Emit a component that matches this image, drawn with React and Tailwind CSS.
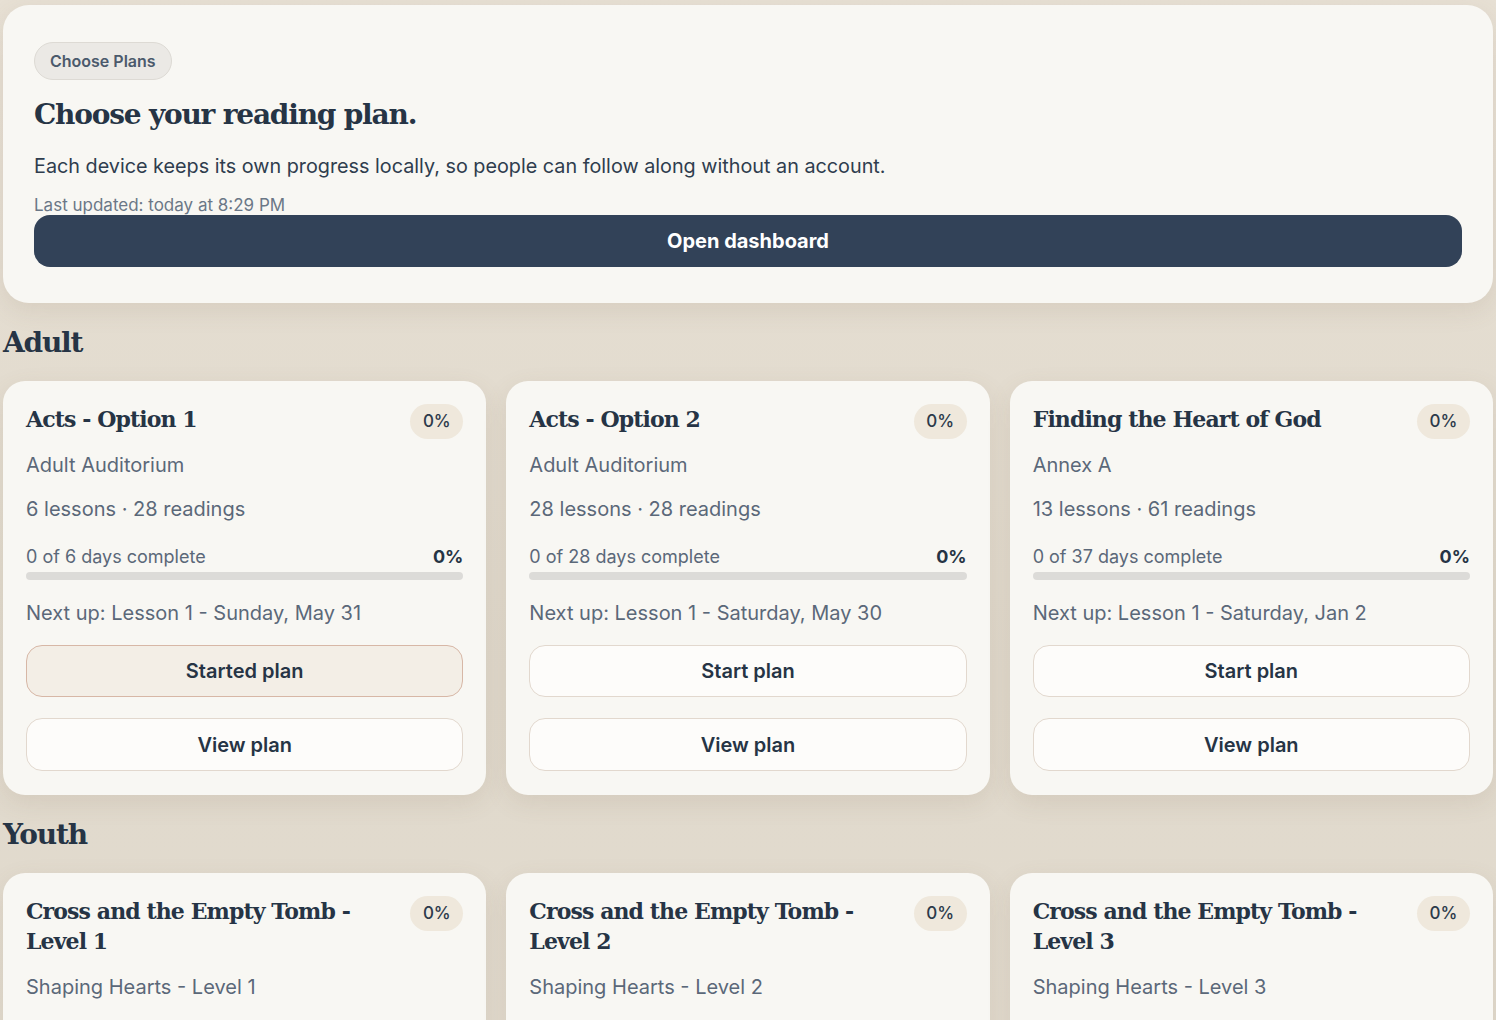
const plans = {
  Adult: [
    {
      id: "acts-1",
      title: "Acts - Option 1",
      location: "Adult Auditorium",
      lessons: 6,
      readings: 28,
      days: 6,
      next: "Next up: Lesson 1 - Sunday, May 31",
      started: true,
    },
    {
      id: "acts-2",
      title: "Acts - Option 2",
      location: "Adult Auditorium",
      lessons: 28,
      readings: 28,
      days: 28,
      next: "Next up: Lesson 1 - Saturday, May 30",
    },
    {
      id: "heart",
      title: "Finding the Heart of God",
      location: "Annex A",
      lessons: 13,
      readings: 61,
      days: 37,
      next: "Next up: Lesson 1 - Saturday, Jan 2",
    },
  ],
  Youth: [
    { id: "cross-1", title: "Cross and the Empty Tomb - Level 1", location: "Shaping Hearts - Level 1", lessons: 8, readings: 40, days: 40, next: "Next up: Lesson 1 - Sunday, May 31" },
    { id: "cross-2", title: "Cross and the Empty Tomb - Level 2", location: "Shaping Hearts - Level 2", lessons: 8, readings: 40, days: 40, next: "Next up: Lesson 1 - Sunday, May 31" },
    { id: "cross-3", title: "Cross and the Empty Tomb - Level 3", location: "Shaping Hearts - Level 3", lessons: 8, readings: 40, days: 40, next: "Next up: Lesson 1 - Sunday, May 31" },
  ],
};

const serif = "font-['DejaVu_Serif',serif]";

const PlanCard = ({ plan }) => {
  return (
    <div className="bg-[#f8f7f3] rounded-[22px] px-[23px] pt-[23px] pb-[24px] shadow-[0_8px_24px_rgba(120,100,70,0.12)]">
      <div className="flex items-start justify-between gap-4">
        <h3 className={`${serif} font-bold text-[22px] leading-[30px] tracking-[-0.9px] text-[#263445] max-w-[340px]`}>
          {plan.title}
        </h3>
        <span className="shrink-0 -mb-[5px] bg-[#efe8dc] rounded-full w-[53px] h-[35px] flex items-center justify-center text-[17px] font-medium text-[#2c3a4b]">
          0%
        </span>
      </div>

      <p className="mt-[17px] text-[20px] leading-[28px] text-[#5b6879]">{plan.location}</p>
      <p className="mt-[16px] text-[20px] leading-[28px] text-[#5b6879]">
        {plan.lessons} lessons · {plan.readings} readings
      </p>

      {/* progress */}
      <div className="mt-[20px] flex items-center justify-between text-[18px] leading-[28px]">
        <span className="text-[#5b6879]">0 of {plan.days} days complete</span>
        <span className="font-bold text-[#263445]">0%</span>
      </div>
      <div className="mt-[1px] h-[8px] rounded-full bg-[#dcdbd8]"></div>

      <p className="mt-[19px] text-[20px] leading-[28px] text-[#5b6879]">{plan.next}</p>

      <button
        className={
          plan.started
            ? "mt-[18px] w-full h-[52px] rounded-[16px] border border-[#d7b7a6] bg-[#f3eee6] text-[20px] font-semibold text-[#263445]"
            : "mt-[18px] w-full h-[52px] rounded-[16px] border border-[#e2d8ce] bg-[#fdfcfa] text-[20px] font-semibold text-[#263445]"
        }
      >
        {plan.started ? "Started plan" : "Start plan"}
      </button>
      <button className="mt-[21px] w-full h-[53px] rounded-[16px] border border-[#e2d8ce] bg-[#fdfcfa] text-[20px] font-semibold text-[#263445]">
        View plan
      </button>
    </div>
  );
};

export default function App() {
  return (
    <div className="min-h-screen bg-gradient-to-b from-[#e7e0d4] via-[#e0d9cc] to-[#e4ddd1] px-[3px] pt-[5px] pb-10 font-['Inter',sans-serif] text-[#263445]">
      {/* Hero */}
      <div className="bg-[#f8f7f3] rounded-[26px] px-[31px] pt-[37px] pb-[36px] shadow-[0_8px_24px_rgba(120,100,70,0.12)]">
        <span className="inline-flex items-center h-[38px] px-[15px] rounded-full bg-[#ebe9e5] border border-[#dddad4] text-[16px] font-semibold text-[#4b5a6c]">
          Choose Plans
        </span>
        <h1 className={`${serif} mt-[15px] font-bold text-[28px] leading-[40px] tracking-[-1.2px] text-[#263445]`}>
          Choose your reading plan.
        </h1>
        <p className="mt-[16px] text-[19.8px] leading-[30px] text-[#2f3d4e]">
          Each device keeps its own progress locally, so people can follow along without an account.
        </p>
        <p className="mt-[14px] text-[17px] leading-[20px] text-[#6b7787]">Last updated: today at 8:29 PM</p>
        <button className="w-full h-[52px] rounded-[16px] bg-[#324258] text-white text-[20px] font-bold">
          Open dashboard
        </button>
      </div>

      {Object.entries(plans).map(([group, items]) => (
        <section key={group}>
          <h2 className={`${serif} mt-[22px] font-bold text-[28px] leading-[36px] tracking-[-1.2px] text-[#263445]`}>
            {group}
          </h2>
          <div className="mt-[20px] grid grid-cols-3 gap-[20px]">
            {items.map((plan) => (
              <PlanCard key={plan.id} plan={plan} />
            ))}
          </div>
        </section>
      ))}
    </div>
  );
}
